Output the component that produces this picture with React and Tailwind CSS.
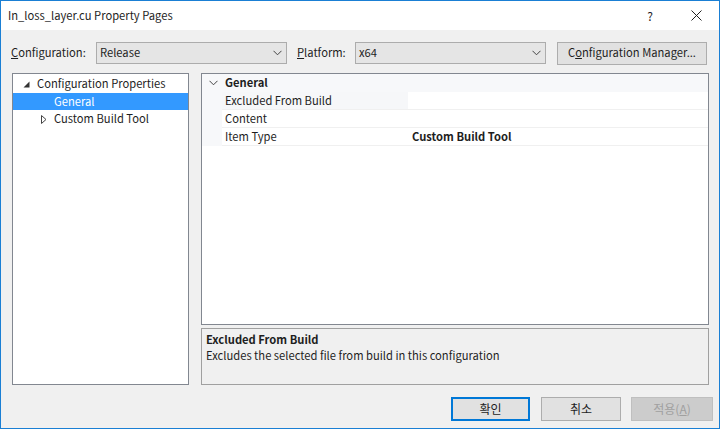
import React from "react";

const font = { fontFamily: '"Noto Sans CJK KR", "Noto Sans", sans-serif' };

function Chevron({ className = "" }) {
  return (
    <svg width="9" height="6" viewBox="0 0 9 6" className={className}>
      <path d="M0.5 0.8 L4.5 4.8 L8.5 0.8" fill="none" stroke="#444" strokeWidth="1" />
    </svg>
  );
}

function Combo({ value }) {
  return (
    <div className="w-[191px] h-[22px] bg-[#e5e5e5] border border-[#acacac] flex items-center justify-between pl-[3px] pr-[4px]">
      <span>{value}</span>
      <Chevron />
    </div>
  );
}

export default function App() {
  return (
    <div
      className="w-[720px] h-[429px] border border-[#1a7fd4] bg-[#f0f0f0] flex flex-col text-[11.2px] text-[#1e1e1e] leading-none overflow-hidden"
      style={font}
    >
      {/* title bar */}
      <div className="h-[29px] bg-white flex items-center pl-[7px] shrink-0">
        <span>In_loss_layer.cu Property Pages</span>
        <div className="ml-auto flex items-center">
          <span className="text-[12px] w-[46px] text-center">?</span>
          <div className="w-[46px] flex justify-center">
            <svg width="11" height="11" viewBox="0 0 11 11">
              <path d="M0.5 0.5 L10.5 10.5 M10.5 0.5 L0.5 10.5" stroke="#222" strokeWidth="1" />
            </svg>
          </div>
        </div>
      </div>

      {/* configuration row */}
      <div className="flex items-center mt-[12px] pl-[10px] h-[22px]">
        <span className="w-[85px]">
          <u>C</u>onfiguration:
        </span>
        <Combo value="Release" />
        <span className="ml-[10px] w-[58px]">
          <u>P</u>latform:
        </span>
        <Combo value="x64" />
        <div className="ml-[11px] w-[150px] h-[23px] bg-[#e1e1e1] border border-[#adadad] flex items-center justify-center">
          C<u>o</u>nfiguration Manager...
        </div>
      </div>

      {/* panels */}
      <div className="flex mt-[9px] pl-[11px] h-[312px]">
        {/* tree */}
        <div className="w-[177px] h-full bg-white border border-[#828790] pt-[1px] flex flex-col">
          <div className="h-[18px] flex items-center">
            <svg width="7" height="7" viewBox="0 0 7 7" className="ml-[10px]">
              <polygon points="6.5,0.5 6.5,6.5 0.5,6.5" fill="#333" />
            </svg>
            <span className="ml-[7px]">Configuration Properties</span>
          </div>
          <div className="h-[17px] bg-[#3399ff] text-white flex items-center pl-[41px]">General</div>
          <div className="h-[18px] flex items-center">
            <svg width="6" height="9" viewBox="0 0 6 9" className="ml-[28px]">
              <polygon points="0.5,0.5 5,4.5 0.5,8.5" fill="none" stroke="#444" strokeWidth="1" />
            </svg>
            <span className="ml-[7px]">Custom Build Tool</span>
          </div>
        </div>

        {/* right column */}
        <div className="ml-[12px] w-[508px] flex flex-col">
          <div className="h-[253px] bg-white border border-[#828790] flex flex-col">
            <div className="h-[18px] flex items-center bg-[#f7f8fa]">
              <div className="w-[23px] flex justify-center">
                <Chevron />
              </div>
              <span className="font-bold">General</span>
            </div>
            {[
              ["Excluded From Build", "", "bg-[#f6f7f9]"],
              ["Content", "", "bg-white"],
              ["Item Type", "Custom Build Tool", "bg-white"],
            ].map(([name, value, bg]) => (
              <div key={name} className="h-[18px] flex">
                <div className="w-[20px] bg-[#f7f8fa]" />
                <div className={`w-[186px] flex items-center pl-[3px] border-b border-[#f0f0f0] ${bg}`}>{name}</div>
                <div className="flex-1 flex items-center pl-[4px] font-bold border-b border-[#f0f0f0]">{value}</div>
              </div>
            ))}
          </div>
          <div className="mt-[3px] h-[57px] bg-[#f0f0f0] border border-[#a0a0a0] px-[4px] pt-[2px]">
            <div className="font-bold h-[16px] flex items-center">Excluded From Build</div>
            <div className="h-[17px] flex items-center">Excludes the selected file from build in this configuration</div>
          </div>
        </div>
      </div>

      {/* buttons */}
      <div className="flex mt-[12px] pl-[450px] text-[12px]">
        <div className="w-[79px] h-[24px] bg-[#e1e1e1] border-2 border-[#0078d7] flex items-center justify-center">확인</div>
        <div className="ml-[11px] w-[80px] h-[24px] bg-[#e1e1e1] border border-[#adadad] flex items-center justify-center">취소</div>
        <div className="ml-[10px] w-[82px] h-[24px] bg-[#cccccc] border border-[#bfbfbf] text-[#a0a0a0] flex items-center justify-center">
          적용(<u>A</u>)
        </div>
      </div>
    </div>
  );
}
